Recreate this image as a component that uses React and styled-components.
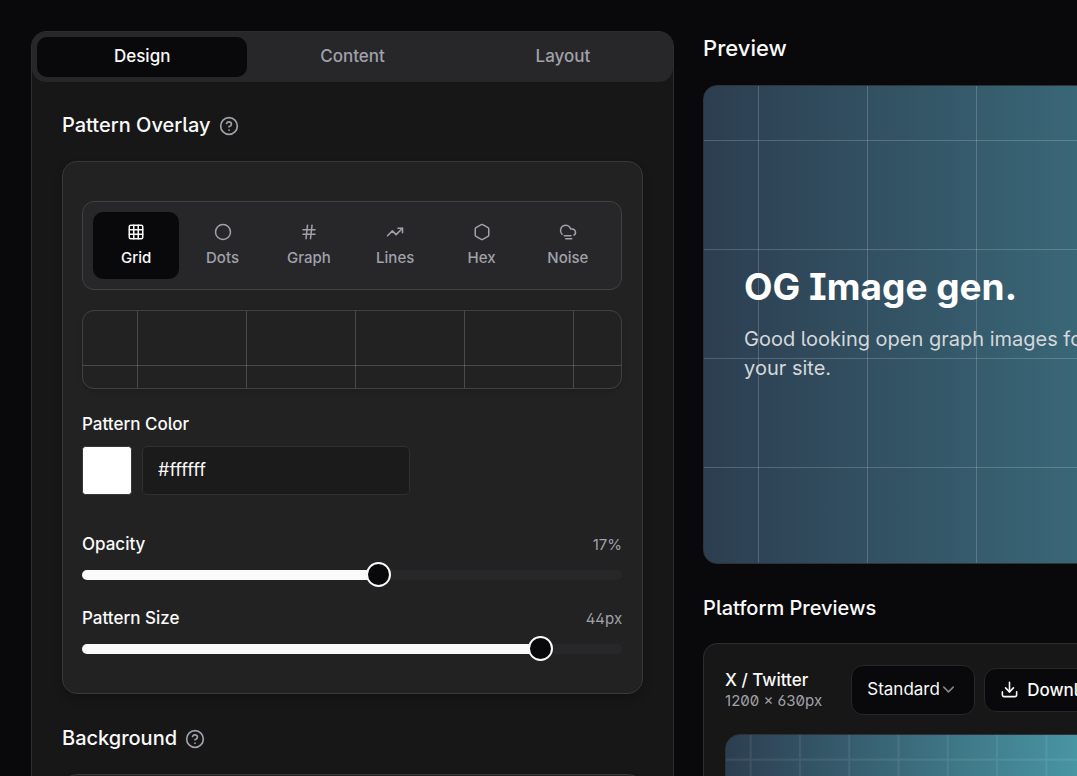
import React, { useId, useState } from "react";
import styled, { createGlobalStyle } from "styled-components";
import {
  ChevronDown,
  Circle,
  CircleHelp,
  CloudFog,
  Download,
  Grid3x3,
  Hash,
  Hexagon,
  TrendingUp,
} from "lucide-react";

const GlobalStyle = createGlobalStyle`
  *, *::before, *::after { box-sizing: border-box; }
  html { background: #09090b; }
  body {
    margin: 0;
    min-height: 100vh;
    overflow: hidden;
    background: #09090b;
    color: #fafafa;
    font-family: Inter, "Liberation Sans", sans-serif;
    font-size: 17px;
    font-feature-settings: "ss02" 1, "cv02" 1, "cv03" 1, "cv04" 1, "zero" 1;
  }
  button, input, select { font: inherit; font-feature-settings: inherit; color: inherit; }
  h1, h2, h3, p { margin: 0; }
`;

const Page = styled.main`
  display: grid;
  grid-template-columns: repeat(12, minmax(0, 1fr));
  gap: 29px;
  align-items: start;
  width: max(100%, 1646px);
  height: 100vh;
  padding: 31px;
`;

const Editor = styled.section`
  grid-column: span 5;
  border: 1px solid #2d2d2f;
  border-radius: 15px;
  background: #171717;
`;

const Tabs = styled.div`
  display: flex;
  height: 50px;
  padding: 5px;
  border-radius: 14px;
  background: #27272a;
`;

const Tab = styled.button`
  flex: 1;
  padding: 0 0 2px;
  border: 0;
  border-radius: 10px;
  font-size: 17px;
  font-weight: 500;
  color: ${(p) => (p.$active ? "#fafafa" : "#a1a1aa")};
  background: ${(p) => (p.$active ? "#09090b" : "transparent")};
`;

const EditorBody = styled.div`
  padding: 29px 30px;
`;

const Section = styled.section`
  margin-bottom: 30px;
`;

const SectionHead = styled.div`
  display: flex;
  align-items: center;
  gap: 8px;
  height: 29px;
  margin-bottom: 21px;
  svg { color: #a1a1aa; }
`;

const SectionTitle = styled.h2`
  font-size: 20px;
  font-weight: 500;
  line-height: 29px;
`;

const Card = styled.div`
  padding: 39px 20px 35px 19px;
  min-height: 80px;
  border: 1px solid #38383a;
  border-radius: 15px;
  background: #222222;
  box-shadow: 0 5px 8px rgba(0, 0, 0, 0.2);
`;

const PatternList = styled.div`
  display: flex;
  height: 89px;
  padding: 10px;
  margin-bottom: 20px;
  border: 1px solid #414144;
  border-radius: 12px;
  background: #27272a;
`;

const PatternButton = styled.button`
  flex: 1;
  display: flex;
  flex-direction: column;
  align-items: center;
  gap: 5px;
  padding: 11px 0 9px;
  border: 0;
  border-radius: 10px;
  font-size: 15px;
  font-weight: 500;
  line-height: 24px;
  color: ${(p) => (p.$active ? "#fafafa" : "#a1a1aa")};
  background: ${(p) => (p.$active ? "#09090b" : "transparent")};
`;

const PatternStrip = styled.div`
  height: 79px;
  margin-bottom: 21px;
  overflow: hidden;
  border: 1px solid #414144;
  border-radius: 12px;
  box-shadow: 0 3px 5px rgba(0, 0, 0, 0.12);
`;

const PatternSvg = styled.svg`
  display: block;
  width: 100%;
  height: 100%;
`;

const FieldLabel = styled.label`
  display: block;
  font-size: 17px;
  font-weight: 500;
  line-height: 29px;
`;

const ColorRow = styled.div`
  display: flex;
  gap: 10px;
  margin: 7px 0 35px;
`;

const Swatch = styled.input`
  width: 50px;
  height: 49px;
  padding: 0;
  border: 1px solid #38383a;
  border-radius: 4px;
  background: #ffffff;
  &::-webkit-color-swatch-wrapper { padding: 0; }
  &::-webkit-color-swatch { border: 0; border-radius: 3px; }
`;

const HexInput = styled.input`
  width: 268px;
  height: 49px;
  padding: 0 15px 2px;
  border: 1px solid #303032;
  border-radius: 5px;
  background: #1b1b1b;
  font-size: 18px;
`;

const SliderField = styled.div`
  height: 54px;
  margin-bottom: 20px;
  &:last-child { margin-bottom: 0; }
`;

const SliderHead = styled.div`
  display: flex;
  justify-content: space-between;
  align-items: center;
  height: 29px;
`;

const SliderValue = styled.output`
  font-size: 15px;
  color: #a1a1aa;
`;

const Range = styled.input`
  display: block;
  appearance: none;
  width: 100%;
  height: 25px;
  margin: 3px 0 0;
  background: transparent;
  &::-webkit-slider-runnable-track {
    height: 10px;
    border-radius: 5px;
    background: linear-gradient(90deg, #fafafa var(--fill), #27272a var(--fill));
  }
  &::-webkit-slider-thumb {
    appearance: none;
    width: 25px;
    height: 25px;
    margin-top: -8px;
    border: 2px solid #fafafa;
    border-radius: 50%;
    background: #09090b;
  }
`;

const Results = styled.div`
  grid-column: span 7;
`;

const PreviewTitle = styled.h2`
  margin: 1px 0 20px;
  font-size: 22px;
  font-weight: 500;
  line-height: 33px;
`;

const Canvas = styled.div`
  display: grid;
  aspect-ratio: 1200 / 630;
  overflow: hidden;
  border: 1px solid #2d3338;
  border-radius: ${(p) => (p.$small ? "15px" : "14px")};
  background: linear-gradient(90deg, #2c3e50, #4ca1af);
  > * { grid-area: 1 / 1; min-height: 0; }
`;

const CanvasText = styled.div`
  align-self: center;
  padding: 0 40px 2px;
`;

const CanvasTitle = styled.h1`
  font-size: 37px;
  font-weight: 700;
  line-height: 48px;
  color: #ffffff;
`;

const CanvasCopy = styled.p`
  max-width: 380px;
  margin-top: 14px;
  font-size: 20px;
  line-height: 29px;
  color: #d4d8dc;
`;

const PlatformTitle = styled.h2`
  margin: 30px 0 20px;
  font-size: 20px;
  font-weight: 500;
  line-height: 29px;
`;

const PlatformGrid = styled.div`
  display: grid;
  grid-template-columns: 1fr 1fr;
  gap: 24px;
`;

const PlatformCard = styled.article`
  padding: 21px;
  border: 1px solid #2d2d2f;
  border-radius: 14px;
  background: #171717;
`;

const PlatformHead = styled.header`
  display: flex;
  align-items: center;
  justify-content: space-between;
  height: 50px;
  margin-bottom: 19px;
`;

const PlatformName = styled.h3`
  font-size: 17px;
  font-weight: 500;
  line-height: 22px;
`;

const PlatformSize = styled.p`
  font-size: 15px;
  line-height: 20px;
  color: #a1a1aa;
`;

const Actions = styled.div`
  display: flex;
  align-items: center;
  gap: 9px;
`;

const SelectWrap = styled.div`
  display: grid;
  align-items: center;
  width: 124px;
  height: 50px;
  > * { grid-area: 1 / 1; }
  svg { justify-self: end; margin-right: 17px; color: #858588; pointer-events: none; }
`;

const Select = styled.select`
  appearance: none;
  width: 100%;
  height: 100%;
  padding: 0 35px 1px 15px;
  border: 1px solid #27272a;
  border-radius: 12px;
  background: #09090b;
  font-size: 17px;
`;

const DownloadButton = styled.button`
  display: flex;
  align-items: center;
  gap: 8px;
  height: 44px;
  padding: 0 15px;
  border: 1px solid #27272a;
  border-radius: 12px;
  background: #09090b;
  font-size: 17px;
  font-weight: 500;
`;

function GridPattern({ cell = 109, stroke = 1, opacity = 0.18, viewBox }) {
  const id = useId();
  const mid = Math.floor(cell / 2) + 0.5;
  return (
    <PatternSvg viewBox={viewBox} preserveAspectRatio="xMinYMin slice" aria-hidden="true">
      <defs>
        <pattern id={id} width={cell} height={cell} patternUnits="userSpaceOnUse">
          <path
            d={`M${mid} 0V${cell}M0 ${mid}H${cell}`}
            stroke="#fff"
            strokeWidth={stroke}
            strokeOpacity={opacity}
          />
        </pattern>
      </defs>
      <rect width="100%" height="100%" fill={`url(#${id})`} />
    </PatternSvg>
  );
}

function Slider({ id, label, unit, min, max, initial }) {
  const [value, setValue] = useState(initial);
  const ratio = ((value - min) / (max - min)) * 100;
  return (
    <SliderField>
      <SliderHead>
        <FieldLabel htmlFor={id}>{label}</FieldLabel>
        <SliderValue htmlFor={id}>{value}{unit}</SliderValue>
      </SliderHead>
      <Range
        id={id}
        type="range"
        min={min}
        max={max}
        value={value}
        onChange={(e) => setValue(Number(e.target.value))}
        style={{ "--fill": `${ratio}%` }}
      />
    </SliderField>
  );
}

function Platform({ name, size }) {
  return (
    <PlatformCard>
      <PlatformHead>
        <div>
          <PlatformName>{name}</PlatformName>
          <PlatformSize>{size}</PlatformSize>
        </div>
        <Actions>
          <SelectWrap>
            <Select aria-label={`${name} format`}>
              <option>Standard</option>
            </Select>
            <ChevronDown size={19} />
          </SelectWrap>
          <DownloadButton type="button">
            <Download size={19} />
            Download
          </DownloadButton>
        </Actions>
      </PlatformHead>
      <Canvas $small>
        <GridPattern stroke={4} opacity={0.08} viewBox="0 0 880 461" />
      </Canvas>
    </PlatformCard>
  );
}

const tabs = ["Design", "Content", "Layout"];
const patterns = [
  ["Grid", Grid3x3],
  ["Dots", Circle],
  ["Graph", Hash],
  ["Lines", TrendingUp],
  ["Hex", Hexagon],
  ["Noise", CloudFog],
];

export default function App() {
  const [tab, setTab] = useState("Design");
  const [pattern, setPattern] = useState("Grid");
  const [color, setColor] = useState("#ffffff");
  return (
    <>
      <GlobalStyle />
      <Page>
        <Editor>
          <Tabs role="tablist">
            {tabs.map((t) => (
              <Tab key={t} type="button" role="tab" aria-selected={t === tab} $active={t === tab} onClick={() => setTab(t)}>
                {t}
              </Tab>
            ))}
          </Tabs>
          <EditorBody>
            <Section>
              <SectionHead>
                <SectionTitle>Pattern Overlay</SectionTitle>
                <CircleHelp size={20} />
              </SectionHead>
              <Card>
                <PatternList>
                  {patterns.map(([name, Icon]) => (
                    <PatternButton key={name} type="button" $active={name === pattern} onClick={() => setPattern(name)}>
                      <Icon size={20} />
                      {name}
                    </PatternButton>
                  ))}
                </PatternList>
                <PatternStrip>
                  <GridPattern />
                </PatternStrip>
                <FieldLabel htmlFor="pattern-color">Pattern Color</FieldLabel>
                <ColorRow>
                  <Swatch type="color" aria-label="Pick color" value={color} onChange={(e) => setColor(e.target.value)} />
                  <HexInput id="pattern-color" type="text" value={color} onChange={(e) => setColor(e.target.value)} />
                </ColorRow>
                <Slider id="opacity" label="Opacity" unit="%" min={1} max={30} initial={17} />
                <Slider id="size" label="Pattern Size" unit="px" min={5} max={50} initial={44} />
              </Card>
            </Section>
            <Section>
              <SectionHead>
                <SectionTitle>Background</SectionTitle>
                <CircleHelp size={20} />
              </SectionHead>
              <Card />
            </Section>
          </EditorBody>
        </Editor>
        <Results>
          <PreviewTitle>Preview</PreviewTitle>
          <Canvas>
            <GridPattern />
            <CanvasText>
              <CanvasTitle>OG Image gen.</CanvasTitle>
              <CanvasCopy>Good looking open graph images for your site.</CanvasCopy>
            </CanvasText>
          </Canvas>
          <PlatformTitle>Platform Previews</PlatformTitle>
          <PlatformGrid>
            <Platform name="X / Twitter" size="1200 × 630px" />
            <Platform name="Facebook" size="1200 × 630px" />
          </PlatformGrid>
        </Results>
      </Page>
    </>
  );
}
